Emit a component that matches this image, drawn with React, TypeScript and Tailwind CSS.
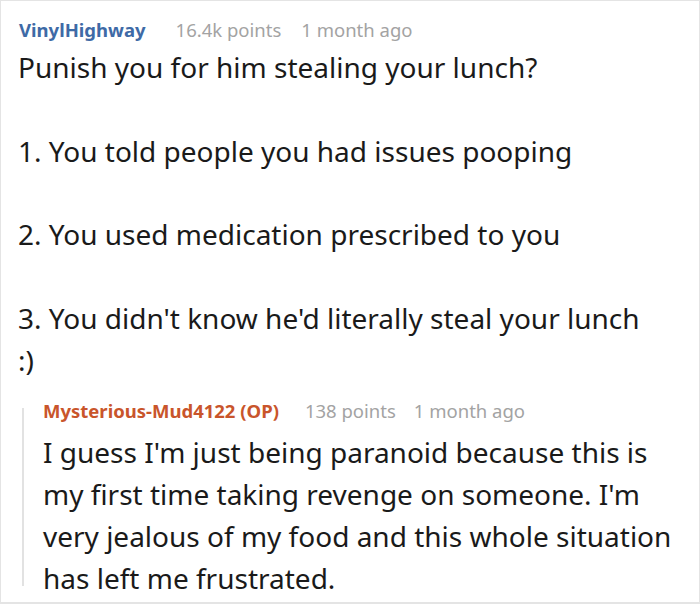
import React from "react";

const body = "text-[28px] leading-[41.8px] text-[#1a1a1a]";
const meta = "text-[#a3a3a3]";

export default function App() {
  return (
    <div className="w-[700px] h-[604px] bg-white border border-b-2 border-[#e4e4e4] overflow-hidden font-['Noto_Sans',sans-serif]">
      <div className="pl-[17px] pt-[15px]">
        <div className="flex items-baseline pl-[1px] text-[18.5px] leading-[28px]">
          <span className="font-bold text-[#3e6aa6]">VinylHighway</span>
          <span className={"ml-[30px] " + meta}>16.4k points</span>
          <span className={"ml-[20px] " + meta}>1 month ago</span>
        </div>
        <div className={body + " mt-[3px] w-[630px]"}>
          <p>Punish you for him stealing your lunch?</p>
          <p>&nbsp;</p>
          <p>1. You told people you had issues pooping</p>
          <p>&nbsp;</p>
          <p>2. You used medication prescribed to you</p>
          <p>&nbsp;</p>
          <p>3. You didn't know he'd literally steal your lunch :)</p>
        </div>
      </div>
      <div className="flex ml-[21px] mt-[16px]">
        <div className="w-[2px] mt-[11px] mb-[14px] bg-[#e2e2e2]" />
        <div className="pl-[19px]">
          <div className="flex items-baseline text-[18.5px] leading-[28px]">
            <span className="font-bold text-[#c9552b]">Mysterious-Mud4122 (OP)</span>
            <span className={"ml-[26px] " + meta}>138 points</span>
            <span className={"ml-[18px] " + meta}>1 month ago</span>
          </div>
          <p className={body + " mt-[7px] w-[636px]"}>
            I guess I'm just being paranoid because this is my first time taking revenge on someone. I'm very jealous of my food and this whole situation has left me frustrated.
          </p>
        </div>
      </div>
    </div>
  );
}
